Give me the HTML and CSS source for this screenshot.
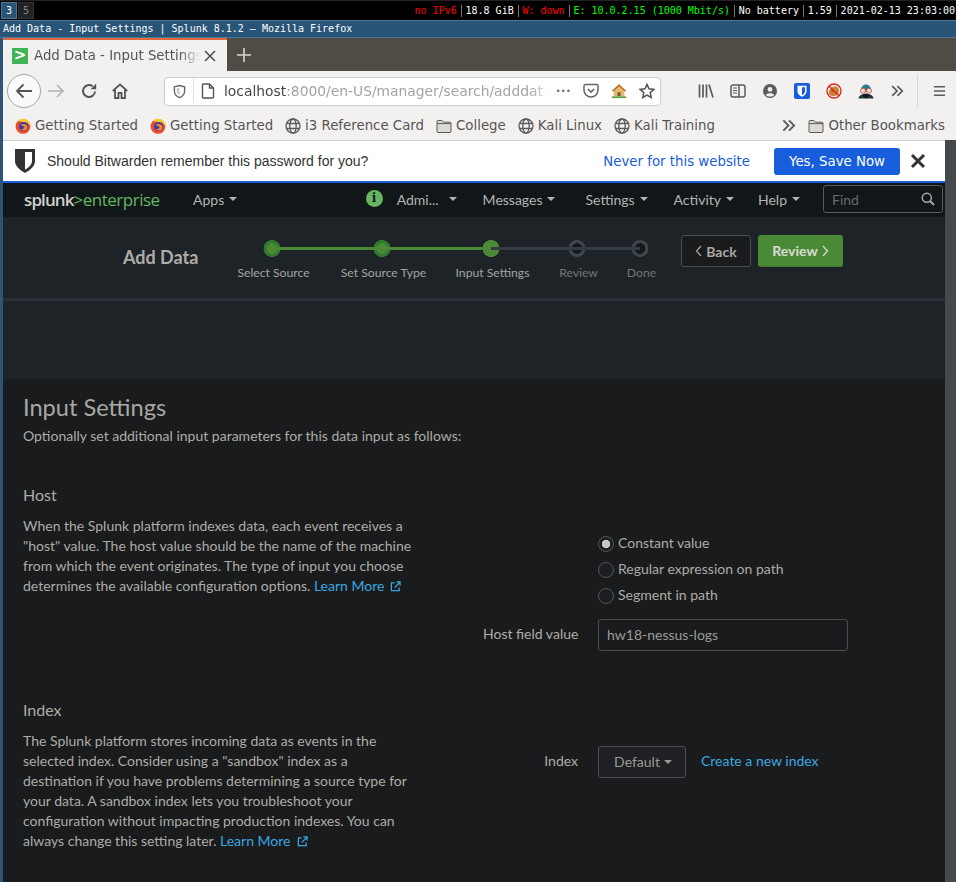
FILE: index.html
```html
<!DOCTYPE html>
<html lang="en">
<head>
    <meta charset="UTF-8">
    <meta name="viewport" content="width=device-width, initial-scale=1.0">
    <title>Add Data - Input Settings | Splunk 8.1.2</title>
    <link rel="stylesheet" href="styles.css">
</head>
<body>
    <svg class="defs" width="0" height="0">
        <defs>
            <symbol id="firefox" viewBox="0 0 16 16">
                <circle cx="8" cy="8.4" r="7.4" fill="#ef4b2a"/>
                <path d="M3 3 C6 -0.5 13 0 15.4 6.5 C15.8 10 14.5 6 12 4.5 C9 3.4 5 4 3 3Z" fill="#ffcb2e"/>
                <circle cx="8.6" cy="8.6" r="4.6" fill="#3a3fa8"/>
                <path d="M5.5 7 C8 4.8 12.6 6 12.4 9.4 C12 12.6 8 13.4 5.8 11 C8 11.2 10.2 10.4 9.5 9 C9 8 7 8 5.5 7Z" fill="#ff8a1f"/>
            </symbol>
            <symbol id="globe" viewBox="0 0 16 16">
                <g fill="none" stroke="#5b5b5b" stroke-width="1.3">
                    <circle cx="8" cy="8" r="7"/>
                    <ellipse cx="8" cy="8" rx="3.2" ry="7"/>
                    <path d="M1.4 5.5H14.6M1.4 10.5H14.6"/>
                </g>
            </symbol>
            <symbol id="folder" viewBox="0 0 16 16">
                <path d="M1 3.5C1 2.8 1.4 2.5 2 2.5H6L7.5 4.2H14C14.6 4.2 15 4.6 15 5.2V13.5C15 14.1 14.6 14.5 14 14.5H2C1.4 14.5 1 14.1 1 13.5Z" fill="#dcdad7" stroke="#5b5b5b" stroke-width="1"/>
                <path d="M1 5.6H15" stroke="#5b5b5b" stroke-width="1"/>
            </symbol>
            <symbol id="chevrons" viewBox="0 0 16 16">
                <path d="M2.5 2.5L8 8L2.5 13.5M8.5 2.5L14 8L8.5 13.5" fill="none" stroke="#5b5b5b" stroke-width="2"/>
            </symbol>
            <symbol id="external" viewBox="0 0 12 12">
                <path d="M5 2H1.5V10.5H10V7" fill="none" stroke="#3ea6e0" stroke-width="1.4"/>
                <path d="M5 7.2L10.5 1.7M7 1H11V5" fill="none" stroke="#3ea6e0" stroke-width="1.4"/>
            </symbol>
        </defs>
    </svg>

    <!-- i3 bar -->
    <div class="i3bar">
        <div class="workspaces">
            <span class="ws active">3</span>
            <span class="ws">5</span>
        </div>
        <div class="status">
            <span class="red">no IPv6</span><span class="sep"></span>
            <span>18.8 GiB</span><span class="sep"></span>
            <span class="red">W: down</span><span class="sep"></span>
            <span class="green">E: 10.0.2.15 (1000 Mbit/s)</span><span class="sep"></span>
            <span>No battery</span><span class="sep"></span>
            <span>1.59</span><span class="sep"></span>
            <span>2021-02-13 23:03:00</span>
        </div>
    </div>
    <div class="window-title">Add Data - Input Settings | Splunk 8.1.2 — Mozilla Firefox</div>

    <div class="window">
        <div class="browser">
            <div class="tabstrip">
                <div class="tab">
                    <span class="favicon">&gt;</span>
                    <span class="tab-title">Add Data - Input Settings</span>
                    <svg class="tab-close" width="12" height="12" viewBox="0 0 12 12"><path d="M1 1L11 11M11 1L1 11" stroke="#4a4a4a" stroke-width="1.5"/></svg>
                </div>
                <svg class="new-tab" width="14" height="14" viewBox="0 0 14 14"><path d="M7 0V14M0 7H14" stroke="#d8d6d2" stroke-width="1.6"/></svg>
            </div>

            <div class="navbar">
                <div class="back-btn">
                    <svg width="18" height="18" viewBox="0 0 18 18"><path d="M17 9H2M8.5 2.5L2 9L8.5 15.5" fill="none" stroke="#555" stroke-width="1.8"/></svg>
                </div>
                <svg class="nav-icon forward" width="16" height="16" viewBox="0 0 16 16"><path d="M0 8H15M9 2L15 8L9 14" fill="none" stroke="#b5b4b2" stroke-width="1.7"/></svg>
                <svg class="nav-icon reload" width="16" height="16" viewBox="0 0 16 16"><path d="M14 8.5A6 6 0 1 1 11.6 3.2" fill="none" stroke="#555" stroke-width="2"/><path d="M9.5 6.2H15.2V0.5Z" fill="#555"/></svg>
                <svg class="nav-icon home" width="16" height="16" viewBox="0 0 16 16"><path d="M0.8 8L8 1.4L15.2 8M3 6.5V15H6.5V10H9.5V15H13V6.5" fill="none" stroke="#555" stroke-width="1.8"/></svg>

                <div class="urlbar">
                    <svg class="url-shield" width="13" height="15" viewBox="0 0 14 15"><path d="M1.5 2.5L7 1L12.5 2.5V7C12.5 10.5 10 13 7 14C4 13 1.5 10.5 1.5 7Z" fill="none" stroke="#666" stroke-width="1.5"/><path d="M7 3.5V11.5C5.5 10.6 4 9.2 4 7V4.4Z" fill="#666" opacity="0.35"/></svg>
                    <span class="url-divider"></span>
                    <svg class="url-page" width="14" height="16" viewBox="0 0 14 16"><path d="M2 1H8.5L12.5 5V14C12.5 14.6 12.1 15 11.5 15H2.5C1.9 15 1.5 14.6 1.5 14V2C1.5 1.4 1.6 1 2 1ZM8.5 1V5H12.5" fill="none" stroke="#555" stroke-width="1.4"/></svg>
                    <div class="url-text"><span class="host">localhost</span>:8000/en-US/manager/search/adddat</div>
                    <span class="url-dots">•••</span>
                    <svg class="url-action" width="16" height="16" viewBox="0 0 16 16"><path d="M1 3C1 2 1.6 1.5 2.4 1.5H13.6C14.4 1.5 15 2 15 3V7A7 7 0 0 1 1 7Z" fill="none" stroke="#666" stroke-width="1.5"/><path d="M4.8 6L8 9L11.2 6" fill="none" stroke="#666" stroke-width="1.7"/></svg>
                    <svg class="url-action" width="16" height="16" viewBox="0 0 18 18"><path d="M9 1.5L17 9H15V15H3V9H1Z" fill="#e8b868"/><path d="M9 1.5L17 9L15.5 9.6L9 3.6L2.5 9.6L1 9Z" fill="#b5642a"/><path d="M7.3 10.5H10.7V15H7.3Z" fill="#5d5a55"/><path d="M1 15H17V17H1Z" fill="#5aa33e"/></svg>
                    <svg class="url-action" width="16" height="16" viewBox="0 0 17 17"><path d="M8.5 1.5L10.6 6.2L15.8 6.8L11.9 10.2L13 15.4L8.5 12.8L4 15.4L5.1 10.2L1.2 6.8L6.4 6.2Z" fill="none" stroke="#555" stroke-width="1.6"/></svg>
                </div>

                <div class="toolbar-icons">
                    <svg width="16" height="16" viewBox="0 0 16 16"><path d="M1.5 1.5V14.5M5 1.5V14.5M8.5 1.5V14.5M11 1.5L15 14.5" fill="none" stroke="#5b5b5b" stroke-width="1.7"/></svg>
                    <svg width="16" height="16" viewBox="0 0 16 16"><rect x="1" y="2" width="14" height="12" rx="2" fill="none" stroke="#5b5b5b" stroke-width="1.5"/><path d="M9 2V14" stroke="#5b5b5b" stroke-width="1.5"/><path d="M3 5H7M3 7.5H7M3 10H7" stroke="#5b5b5b" stroke-width="1"/></svg>
                    <svg width="16" height="16" viewBox="0 0 16 16"><circle cx="8" cy="8" r="7" fill="#5b5b5b"/><circle cx="8" cy="6.4" r="2.4" fill="#f3f1f0"/><path d="M3.8 12C5 9.8 11 9.8 12.2 12C10 14 6 14 3.8 12Z" fill="#f3f1f0"/></svg>
                    <svg width="16" height="16" viewBox="0 0 16 16"><rect width="16" height="16" rx="2" fill="#175ddc"/><path d="M3.5 2.8H12.5V8.5C12.5 11 10 12.8 8 13.8C6 12.8 3.5 11 3.5 8.5Z" fill="#fff"/><path d="M8 4.2H11V8.5C11 10 9.4 11.3 8 12.1Z" fill="#175ddc"/></svg>
                    <svg width="16" height="16" viewBox="0 0 16 16"><path d="M3 10C3 6 6 3.5 9 3.5C12 3.5 13.5 6 13 9C12.5 12 9 13.5 6.5 13C4.5 12.6 3 12 3 10Z" fill="#c9822f"/><circle cx="6.5" cy="7.5" r="1" fill="#7a4a18"/><circle cx="8" cy="8" r="7" fill="none" stroke="#e0281f" stroke-width="1.4"/><path d="M3 3L13 13" stroke="#e0281f" stroke-width="1.4"/></svg>
                    <svg width="16" height="16" viewBox="0 0 16 16"><path d="M2.5 9C2.5 -1 13.5 -1 13.5 9Z" fill="#2c7a8c"/><path d="M0.5 15.5C0.5 9 15.5 9 15.5 15.5Z" fill="#23383f"/><circle cx="5" cy="7.8" r="2.5" fill="#f2d8cc" stroke="#b04a3a" stroke-width="0.7"/><circle cx="11" cy="7.8" r="2.5" fill="#f2d8cc" stroke="#b04a3a" stroke-width="0.7"/><path d="M4 12.5L8 10.5L12 12.5L8 15.5Z" fill="#10191d"/></svg>
                    <svg width="14" height="14" viewBox="0 0 16 16"><use href="#chevrons"/></svg>
                </div>
                <span class="toolbar-divider"></span>
                <svg class="menu-icon" width="13" height="12" viewBox="0 0 14 12"><path d="M1 1.5H13M1 6H13M1 10.5H13" stroke="#5b5b5b" stroke-width="1.7"/></svg>
            </div>

            <div class="bookmarks">
                <span class="bookmark"><svg width="16" height="16"><use href="#firefox"/></svg>Getting Started</span>
                <span class="bookmark"><svg width="16" height="16"><use href="#firefox"/></svg>Getting Started</span>
                <span class="bookmark"><svg width="16" height="16"><use href="#globe"/></svg>i3 Reference Card</span>
                <span class="bookmark"><svg width="16" height="16"><use href="#folder"/></svg>College</span>
                <span class="bookmark"><svg width="16" height="16"><use href="#globe"/></svg>Kali Linux</span>
                <span class="bookmark"><svg width="16" height="16"><use href="#globe"/></svg>Kali Training</span>
                <svg class="bookmark-more" width="15" height="15"><use href="#chevrons"/></svg>
                <span class="bookmark other"><svg width="16" height="16"><use href="#folder"/></svg>Other Bookmarks</span>
            </div>
        </div>

        <div class="page-row">
            <div class="page">
                <div class="notification">
                    <svg class="bw-shield" width="20" height="24" viewBox="0 0 20 24"><path d="M0 0H20V12C20 18 14 21.5 10 24C6 21.5 0 18 0 12Z" fill="#333"/><path d="M10 3H17V12C17 16 13.2 18.8 10 20.6Z" fill="#fff"/></svg>
                    <span class="notification-text">Should Bitwarden remember this password for you?</span>
                    <a class="never-link" href="#">Never for this website</a>
                    <button class="save-btn">Yes, Save Now</button>
                    <svg class="notification-close" width="16" height="16" viewBox="0 0 16 16"><path d="M2 2L14 14M14 2L2 14" stroke="#333" stroke-width="3"/></svg>
                </div>

                <nav class="splunk-nav">
                    <div class="logo"><span class="logo-white">splunk</span><span class="logo-green">&gt;enterprise</span></div>
                    <a class="nav-item apps" href="#">Apps<span class="caret"></span></a>
                    <span class="info-badge">i</span>
                    <a class="nav-item admin" href="#">Admi...<span class="caret"></span></a>
                    <a class="nav-item messages" href="#">Messages<span class="caret"></span></a>
                    <a class="nav-item" href="#">Settings<span class="caret"></span></a>
                    <a class="nav-item activity" href="#">Activity<span class="caret"></span></a>
                    <a class="nav-item help" href="#">Help<span class="caret"></span></a>
                    <div class="find">
                        <span>Find</span>
                        <svg width="14" height="14" viewBox="0 0 14 14"><circle cx="5.8" cy="5.8" r="4.5" fill="none" stroke="#a8a8a4" stroke-width="1.5"/><path d="M9 9L13 13" stroke="#a8a8a4" stroke-width="2"/></svg>
                    </div>
                </nav>

                <div class="wizard">
                    <div class="wizard-title">Add Data</div>
                    <div class="steps">
                        <div class="step step-a done">Select Source</div>
                        <div class="step step-b done">Set Source Type</div>
                        <div class="step step-c current">Input Settings</div>
                        <div class="step step-d">Review</div>
                        <div class="step step-e">Done</div>
                    </div>
                    <div class="wizard-buttons">
                        <button class="btn-back"><svg width="7" height="12" viewBox="0 0 7 12"><path d="M6 1L1.5 6L6 11" fill="none" stroke="#aaa8a3" stroke-width="1.2"/></svg>Back</button>
                        <button class="btn-review">Review<svg width="7" height="12" viewBox="0 0 7 12"><path d="M1 1L5.5 6L1 11" fill="none" stroke="#d9dcd4" stroke-width="1.2"/></svg></button>
                    </div>
                </div>
                <div class="wizard-band"></div>

                <main class="content">
                    <h1>Input Settings</h1>
                    <p class="intro">Optionally set additional input parameters for this data input as follows:</p>

                    <section class="setting host-setting">
                        <div class="setting-info">
                            <h2>Host</h2>
                            <p>When the Splunk platform indexes data, each event receives a "host" value. The host value should be the name of the machine from which the event originates. The type of input you choose determines the available configuration options. <a href="#">Learn More<svg width="11" height="11" viewBox="0 0 12 12"><use href="#external"/></svg></a></p>
                        </div>
                        <div class="setting-form">
                            <div class="radios">
                                <label class="radio checked"><span class="radio-dot"></span>Constant value</label>
                                <label class="radio"><span class="radio-dot"></span>Regular expression on path</label>
                                <label class="radio"><span class="radio-dot"></span>Segment in path</label>
                            </div>
                            <div class="field">
                                <span class="field-label">Host field value</span>
                                <div class="text-input">hw18-nessus-logs</div>
                            </div>
                        </div>
                    </section>

                    <section class="setting index-setting">
                        <div class="setting-info">
                            <h2>Index</h2>
                            <p>The Splunk platform stores incoming data as events in the selected index. Consider using a "sandbox" index as a destination if you have problems determining a source type for your data. A sandbox index lets you troubleshoot your configuration without impacting production indexes. You can always change this setting later. <a href="#">Learn More<svg width="11" height="11" viewBox="0 0 12 12"><use href="#external"/></svg></a></p>
                        </div>
                        <div class="setting-form">
                            <div class="field">
                                <span class="field-label">Index</span>
                                <div class="select-btn">Default<span class="caret"></span></div>
                                <a class="new-index" href="#">Create a new index</a>
                            </div>
                        </div>
                    </section>
                </main>
            </div>
            <div class="scrollbar"></div>
        </div>
    </div>
</body>
</html>
```
FILE: styles.css
```css
* {
    box-sizing: border-box;
}

html, body {
    height: 100%;
}

body {
    margin: 0;
    overflow: hidden;
    background: #2a5578;
    font-family: 'Lato', sans-serif;
    display: flex;
    flex-direction: column;
}

.defs {
    position: absolute;
}

/* i3 bar */
.i3bar {
    flex: none;
    height: 20px;
    background: #000;
    border-top: 1px solid #222;
    display: flex;
    justify-content: space-between;
    align-items: center;
    font-family: 'DejaVu Sans Mono', monospace;
    font-size: 10px;
    color: #fff;
}

.workspaces {
    display: flex;
    gap: 1px;
    padding-left: 1px;
}

.ws {
    width: 16px;
    height: 17px;
    border: 1px solid #333;
    background: #222;
    color: #888;
    text-align: center;
    line-height: 15px;
}

.ws.active {
    background: #285577;
    border-color: #4c7899;
    color: #fff;
}

.status {
    display: flex;
    align-items: center;
    white-space: pre;
    padding-right: 1px;
}

.sep {
    width: 1px;
    height: 12px;
    background: #777;
    margin: 0 3.9px;
}

.red {
    color: #f00;
}

.green {
    color: #0f0;
}

.window-title {
    flex: none;
    height: 18px;
    padding-left: 3px;
    background: #285577;
    border-top: 1px solid #4c7899;
    border-bottom: 1px solid #4c7899;
    font-family: 'DejaVu Sans Mono', monospace;
    font-size: 10px;
    line-height: 15px;
    color: #fff;
}

.window {
    flex: 1;
    min-height: 0;
    margin-left: 3px;
    display: flex;
    flex-direction: column;
    background: #191b1d;
}

/* firefox */
.browser {
    flex: none;
    background: #f3f1f0;
    font-family: 'DejaVu Sans', sans-serif;
    color: #555;
}

.tabstrip {
    height: 33px;
    background: #4f4c46;
    display: flex;
    align-items: center;
}

.tab {
    width: 224px;
    height: 33px;
    padding: 0 11px 0 9px;
    background: #f3f1f0;
    border-top: 2px solid #e06a3c;
    display: flex;
    align-items: center;
    font-size: 13.33px;
}

.favicon {
    flex: none;
    width: 16px;
    height: 16px;
    background: #3fb556;
    color: #fff;
    font-size: 15px;
    font-weight: bold;
    line-height: 15px;
    text-align: center;
    margin-right: 6px;
}

.tab-title {
    flex: 1;
    min-width: 0;
    white-space: nowrap;
    -webkit-mask-image: linear-gradient(to right, #000 88%, transparent);
    mask-image: linear-gradient(to right, #000 88%, transparent);
}

.tab-close {
    flex: none;
    margin-left: 4px;
}

.new-tab {
    margin-left: 10px;
}

.navbar {
    height: 40px;
    display: flex;
    align-items: center;
    padding-left: 4px;
}

.back-btn {
    flex: none;
    width: 34px;
    height: 34px;
    border-radius: 50%;
    border: 1px solid #a8a6a4;
    background: #fbfafa;
    display: flex;
    align-items: center;
    justify-content: center;
}

.nav-icon {
    flex: none;
}

.forward {
    margin-left: 7px;
}

.reload {
    margin-left: 17px;
}

.home {
    margin-left: 15px;
}

.urlbar {
    flex: none;
    width: 497px;
    height: 29px;
    margin-left: 36px;
    background: #fff;
    border: 1px solid #cfcdcb;
    border-radius: 4px;
    display: flex;
    align-items: center;
    padding: 0 5px 0 8px;
    font-size: 13.85px;
    color: #a3a3a3;
}

.url-divider {
    flex: none;
    width: 1px;
    height: 24px;
    margin: 0 7px 0 7px;
    background: #ddd;
}

.url-page {
    flex: none;
}

.url-shield {
    flex: none;
}

.url-text {
    flex: 1;
    min-width: 0;
    margin-left: 9px;
    white-space: nowrap;
    -webkit-mask-image: linear-gradient(to right, #000 92%, transparent);
    mask-image: linear-gradient(to right, #000 92%, transparent);
}

.host {
    color: #444;
}

.url-dots {
    flex: none;
    margin-right: 12px;
    font-size: 8px;
    letter-spacing: 0.4px;
    color: #666;
}

.url-action {
    flex: none;
    margin-right: 12px;
}

.url-action:last-child {
    margin-right: 0;
}

.toolbar-icons {
    display: flex;
    align-items: center;
    gap: 16px;
    margin-left: 37px;
}

.toolbar-divider {
    flex: none;
    width: 1px;
    height: 34px;
    margin-left: 13px;
    background: #d8d6d4;
}

.menu-icon {
    margin-left: 15px;
}

.bookmarks {
    height: 29px;
    display: flex;
    align-items: center;
    padding: 0 11px 0 12px;
    font-size: 13.33px;
    white-space: nowrap;
}

.bookmark {
    display: flex;
    align-items: center;
    gap: 4px;
    margin-right: 12px;
}

.bookmark-more {
    margin-left: auto;
    margin-right: 12px;
}

.bookmark.other {
    margin-right: 0;
}

.notification {
    height: 43px;
    background: #fff;
    border-top: 1px solid #ccc;
    border-bottom: 2px solid #175ddc;
    display: flex;
    align-items: center;
    padding-left: 12px;
    font-family: 'DejaVu Sans', sans-serif;
    font-size: 13.33px;
    color: #333;
}

.bw-shield {
    margin-right: 12px;
}

.notification-text {
    flex: 1;
    font-family: 'Liberation Sans', sans-serif;
    font-size: 14px;
}

.never-link {
    color: #175ddc;
    text-decoration: none;
    margin-right: 24px;
}

.save-btn {
    width: 126px;
    height: 27px;
    border: none;
    border-radius: 3px;
    background: #175ddc;
    color: #fff;
    font: inherit;
}

.notification-close {
    margin: 0 19px 0 10px;
}

/* splunk */
.page-row {
    flex: 1;
    min-height: 0;
    display: flex;
}

.page {
    flex: 1;
    min-width: 0;
    font-family: 'Lato', sans-serif;
    color: #aeaca6;
    overflow: hidden;
}

.scrollbar {
    flex: none;
    width: 11px;
    background: #45494c;
}

.splunk-nav {
    height: 34px;
    background: #111619;
    display: flex;
    align-items: center;
    padding: 0 0 2px 21px;
    font-size: 14px;
}

.logo {
    width: 169px;
    font-family: 'Open Sans', sans-serif;
    font-size: 17px;
}

.logo-white {
    color: #cfd1cc;
    font-weight: 600;
    letter-spacing: -0.9px;
}

.logo-green {
    color: #65b661;
    font-weight: 400;
    letter-spacing: -0.5px;
}

.nav-item {
    color: #b4b4b0;
    text-decoration: none;
    display: flex;
    align-items: center;
    margin-right: 26px;
}

.apps {
    margin-right: 0;
}

.messages {
    margin-right: 30px;
}

.activity {
    margin-right: 24px;
}

.help {
    margin-right: 23px;
}

.caret {
    display: inline-block;
    margin-left: 5px;
    border-top: 4px solid currentColor;
    border-left: 4px solid transparent;
    border-right: 4px solid transparent;
}

.info-badge {
    width: 17px;
    height: 17px;
    margin: -2px 14px 0 auto;
    border-radius: 50%;
    background: #65b661;
    color: #15191c;
    font-family: 'DejaVu Serif', serif;
    font-size: 12px;
    font-weight: bold;
    line-height: 17px;
    text-align: center;
}

.admin .caret {
    margin-left: 10px;
}

.find {
    width: 120px;
    height: 28px;
    margin-right: 2px;
    padding: 0 7px 0 8px;
    border: 1px solid #5a5a55;
    border-radius: 3px;
    display: flex;
    align-items: center;
    justify-content: space-between;
    color: #6c6c68;
}

.wizard {
    height: 81px;
    background: #1e2328;
    display: flex;
    padding: 18px 101px 0 120px;
}

.wizard-title {
    width: 94px;
    margin-top: 11px;
    font-size: 18px;
    font-weight: 700;
    white-space: nowrap;
    color: #aeaca6;
}

.steps {
    display: grid;
    grid-template-columns: 110px 110px 108px 64px 62px;
    height: 48px;
    margin-top: 5px;
}

.step {
    --dot: #12171a;
    --ring: #3e444a;
    position: relative;
    isolation: isolate;
    padding: 25px 0 0 3px;
    font-size: 12.2px;
    white-space: nowrap;
    display: flex;
    justify-content: center;
    color: #a3a39f;
    background: radial-gradient(circle 9px at 50% 8.5px, var(--dot) 0 5px, var(--ring) 5.5px 8.2px, transparent 8.7px);
}

.step-d, .step-e {
    color: #75756f;
}

/* connector halves, the circle sits on top */
.step::before, .step::after {
    content: '';
    position: absolute;
    z-index: -1;
    top: 7px;
    height: 3px;
    width: 50%;
    background: #353c43;
}

.step::before {
    left: 0;
}

.step::after {
    right: 0;
}

.step-a::before, .step-e::after {
    display: none;
}

.step.done::after, .step.done::before, .step.current::before {
    background: #4a8a36;
}

.step.done {
    --dot: #4a8a36;
    --ring: #2f7a2c;
}

.step.current {
    --dot: #4a8a36;
    --ring: #4a8a36;
}

.wizard-buttons {
    display: flex;
    gap: 7px;
    margin-left: 10px;
}

.wizard-buttons button {
    height: 32px;
    border-radius: 3px;
    font-family: inherit;
    font-size: 14px;
    font-weight: 700;
    display: flex;
    align-items: center;
    justify-content: center;
    gap: 4px;
}

.btn-back {
    width: 70px;
    background: #191b1d;
    border: 1px solid #4a4d50;
    color: #aaa8a3;
}

.btn-review {
    width: 85px;
    background: #4a8a36;
    border: none;
    border-bottom: 1px solid #42792f;
    color: #d9dcd4;
}

.wizard-band {
    height: 81px;
    background: #1e2328;
    border-top: 3px solid #2a2f35;
}

.content {
    padding: 0 0 0 20px;
}

h1 {
    margin: 14px 0 0;
    font-size: 23.6px;
    font-weight: 400;
    line-height: 28px;
    color: #a8a8a4;
}

.intro {
    margin: 5px 0 0;
    font-size: 14px;
    line-height: 20px;
}

.setting {
    display: flex;
}

.host-setting {
    margin-top: 37px;
}

.index-setting {
    margin-top: 47px;
}

.setting-info {
    width: 400px;
    flex: none;
}

h2 {
    margin: 0 0 9px;
    font-size: 16px;
    font-weight: 400;
    line-height: 24px;
    color: #aeaca6;
}

.setting-info p {
    max-width: 394px;
    margin: 0;
    font-size: 14px;
    line-height: 20px;
}

.setting-info a, .new-index {
    color: #3ea6e0;
    text-decoration: none;
}

.setting-info a svg {
    margin-left: 6px;
    vertical-align: -1px;
}

.setting-form {
    flex: 1;
    padding-left: 60px;
    font-size: 14px;
}

.host-setting .setting-form {
    padding-top: 53px;
}

.index-setting .setting-form {
    padding-top: 48px;
}

.radios {
    display: flex;
    flex-direction: column;
    gap: 10px;
    margin-left: 115px;
    margin-bottom: 15px;
}

.radio {
    display: flex;
    align-items: flex-start;
    height: 16px;
    line-height: 14px;
}

.radio-dot {
    width: 16px;
    height: 16px;
    margin-right: 4px;
    border: 1px solid #555;
    border-radius: 50%;
    background: #1c1e21;
}

.checked .radio-dot {
    background: radial-gradient(circle, #c8c8c2 0 4px, #1c1e21 4.5px);
}

.field {
    display: flex;
    align-items: center;
}

.field-label {
    width: 95px;
    margin-right: 20px;
    padding-bottom: 3px;
    text-align: right;
    white-space: nowrap;
}

.text-input {
    width: 250px;
    height: 32px;
    padding: 0 8px;
    border: 1px solid #4a4d50;
    border-radius: 3px;
    line-height: 30px;
    color: #9b9b96;
}

.select-btn {
    width: 88px;
    height: 32px;
    border: 1px solid #4a4d50;
    border-radius: 3px;
    background: #1e2023;
    display: flex;
    align-items: center;
    justify-content: center;
    padding: 0 0 1px 2px;
    color: #9b9b96;
}

.select-btn .caret {
    margin-left: 4px;
}

.new-index {
    margin-left: 15px;
    padding-bottom: 3px;
}
```
